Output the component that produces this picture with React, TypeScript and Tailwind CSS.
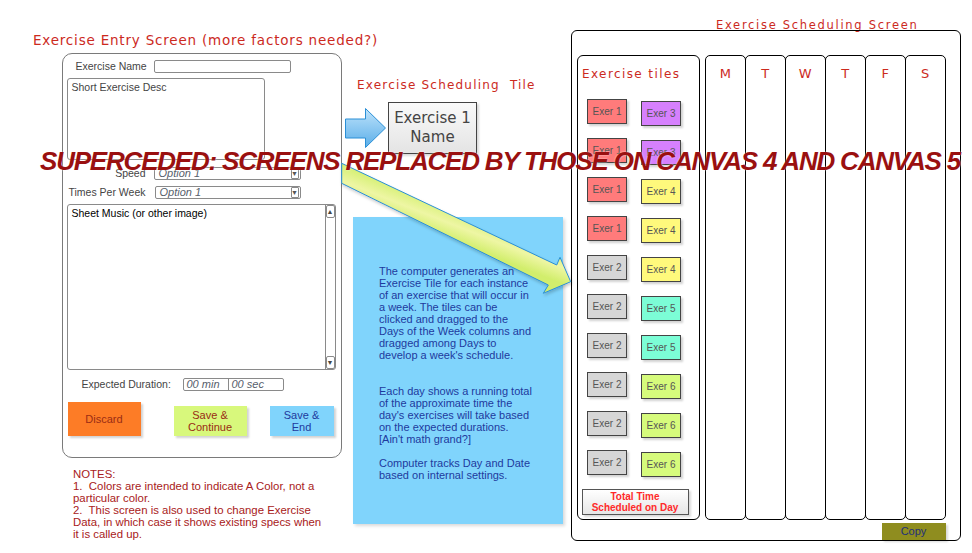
import React from "react";

const hand = "font-['DejaVu_Sans',sans-serif]";
const sans = "font-['Liberation_Sans',Arial,sans-serif]";

const leftTiles: [string, string][] = [
  ["Exer 1", "bg-[#ff7b7b]"],
  ["Exer 1", "bg-[#ff7b7b]"],
  ["Exer 1", "bg-[#ff7b7b]"],
  ["Exer 1", "bg-[#ff7b7b]"],
  ["Exer 2", "bg-[#d6d6d6]"],
  ["Exer 2", "bg-[#d6d6d6]"],
  ["Exer 2", "bg-[#d6d6d6]"],
  ["Exer 2", "bg-[#d6d6d6]"],
  ["Exer 2", "bg-[#d6d6d6]"],
  ["Exer 2", "bg-[#d6d6d6]"],
];

const rightTiles: [string, string][] = [
  ["Exer 3", "bg-[#d680fd]"],
  ["Exer 3", "bg-[#d680fd]"],
  ["Exer 4", "bg-[#fff97c]"],
  ["Exer 4", "bg-[#fff97c]"],
  ["Exer 4", "bg-[#fff97c]"],
  ["Exer 5", "bg-[#7cfdd6]"],
  ["Exer 5", "bg-[#7cfdd6]"],
  ["Exer 6", "bg-[#d6fb7c]"],
  ["Exer 6", "bg-[#d6fb7c]"],
  ["Exer 6", "bg-[#d6fb7c]"],
];

const days = ["M", "T", "W", "T", "F", "S"];

function Select({ w }: { w: string }) {
  return (
    <div className={`flex h-[13px] ${w} items-center rounded-[2px] border border-[#8a8a8a] bg-white`}>
      <span className={`flex-1 pl-[4px] text-[11px] italic leading-none text-[#56606c] ${sans}`}>Option 1</span>
      <span className="mr-[1px] flex h-[11px] w-[8px] items-center justify-center rounded-[1px] border border-[#8a8a8a] text-[7px] leading-none text-[#555]">
        ▼
      </span>
    </div>
  );
}

function Tile({ label, color, className = "" }: { label: string; color: string; className?: string }) {
  return (
    <div
      className={`flex h-[25px] w-[40px] items-center justify-center border border-[#444] text-[10px] leading-none text-[#555] shadow-[2px_2px_2px_rgba(0,0,0,0.18)] ${color} ${sans} ${className}`}
    >
      {label}
    </div>
  );
}

function EntryForm() {
  return (
    <div className="ml-[29px] mt-[6px] flex h-[405px] w-[280px] shrink-0 flex-col rounded-[10px] border-[1.5px] border-[#7a7a7a] text-[10.5px] leading-[13px] text-[#444]">
      {/* name */}
      <div className="mt-[5.5px] flex h-[13px] items-center">
        <span className={`w-[90.5px] pl-[12.5px] ${sans}`}>Exercise Name</span>
        <div className="h-[13px] w-[137px] rounded-[2px] border border-[#8a8a8a]" />
      </div>
      {/* short desc */}
      <div className="ml-[3.5px] mt-[5px] h-[82px] w-[198px] shrink-0 rounded-[3px] border border-[#8a8a8a] pl-[4px] pt-[2px]">
        <span className={sans}>Short Exercise Desc</span>
      </div>
      {/* speed */}
      <div className="mt-[7px] flex h-[13px] items-center">
        <span className={`w-[82.5px] text-right ${sans}`}>Speed</span>
        <div className="ml-[8px]">
          <Select w="w-[147px]" />
        </div>
      </div>
      {/* times */}
      <div className="mt-[6px] flex h-[13px] items-center">
        <span className={`w-[82.5px] text-right ${sans}`}>Times Per Week</span>
        <div className="ml-[9px]">
          <Select w="w-[146px]" />
        </div>
      </div>
      {/* sheet music */}
      <div className="ml-[3.5px] mt-[5px] flex h-[166px] w-[269px] shrink-0 rounded-[3px] border border-[#8a8a8a]">
        <div className={`flex-1 pl-[4px] pt-[2px] text-black ${sans}`}>Sheet Music (or other image)</div>
        <div className="flex w-[10px] flex-col justify-between border-l border-[#8a8a8a]">
          <div className="flex h-[13px] items-center justify-center rounded-[2px] border border-[#8a8a8a] text-[7px] text-[#444]">▲</div>
          <div className="flex h-[13px] items-center justify-center rounded-[2px] border border-[#8a8a8a] text-[7px] text-[#444]">▼</div>
        </div>
      </div>
      {/* duration */}
      <div className="mt-[8px] flex h-[13px] items-center">
        <span className={`w-[119.5px] pl-[18.5px] ${sans}`}>Expected Duration:</span>
        <div className={`flex h-[13px] w-[101px] rounded-[2px] border border-[#8a8a8a] text-[11px] italic leading-[11px] text-[#56606c] ${sans}`}>
          <span className="w-[45px] border-r border-[#8a8a8a] pl-[3px]">00 min</span>
          <span className="pl-[3px]">00 sec</span>
        </div>
      </div>
      {/* buttons */}
      <div className={`mt-[11px] flex h-[34px] items-end text-[11px] leading-[12px] ${sans}`}>
        <div className="ml-[4.5px] flex h-[34px] w-[73px] items-center justify-center bg-[#fd7c26] text-[#9a2c14] shadow-[2px_2px_2px_rgba(0,0,0,0.18)]">
          Discard
        </div>
        <div className="ml-[33px] flex h-[30px] w-[73px] items-center justify-center bg-[#d8f87c] text-center text-[#992c14] shadow-[2px_2px_2px_rgba(0,0,0,0.18)]">
          Save &amp;
          <br />
          Continue
        </div>
        <div className="ml-[23px] flex h-[30px] w-[64px] items-center justify-center bg-[#80d4fc] text-center text-[#1e3a9e] shadow-[2px_2px_2px_rgba(0,0,0,0.18)]">
          Save &amp;
          <br />
          End
        </div>
      </div>
    </div>
  );
}

function LeftColumn() {
  return (
    <div className="ml-[33px] flex w-[312px] shrink-0 flex-col">
      <div className={`mt-[33px] h-[14px] whitespace-nowrap text-[13.5px] leading-[14px] tracking-[0.8px] text-[#cc2a1e] ${hand}`}>
        Exercise Entry Screen (more factors needed?)
      </div>
      <EntryForm />
      <div className={`ml-[40px] mt-[10px] whitespace-pre text-[11.4px] leading-[12px] text-[#a82020] ${sans}`}>
        <div>NOTES:</div>
        <div>1.  Colors are intended to indicate A Color, not a</div>
        <div>particular color.</div>
        <div>2.  This screen is also used to change Exercise</div>
        <div>Data, in which case it shows existing specs when</div>
        <div>it is called up.</div>
      </div>
    </div>
  );
}

function MiddleColumn() {
  return (
    <div className="flex w-[226px] shrink-0 flex-col">
      <div className={`mt-[78px] h-[14px] whitespace-pre pl-[12px] text-[12px] leading-[14px] tracking-[1.2px] text-[#cc2a1e] ${hand}`}>
        Exercise Scheduling  Tile
      </div>
      <div className="mt-[10px] flex items-start">
        <svg width="41" height="41" viewBox="0 0 41 41" className="mt-[6px]">
          <defs>
            <linearGradient id="ba" x1="0" y1="0" x2="0" y2="1">
              <stop offset="0" stopColor="#bfe3fb" />
              <stop offset="1" stopColor="#5aaee8" />
            </linearGradient>
          </defs>
          <polygon
            points="0.5,11 20.5,11 20.5,0.5 40.5,20 20.5,39.5 20.5,30 0.5,30"
            fill="url(#ba)"
            stroke="#2b8fd6"
            strokeWidth="1"
          />
        </svg>
        <div
          className={`ml-[2px] flex h-[52px] w-[89px] flex-col items-center justify-center border border-[#444] bg-gradient-to-b from-[#fafafa] to-[#e4e4e4] text-[15px] leading-[19px] text-[#444] shadow-[2px_2px_2px_rgba(0,0,0,0.15)] ${hand}`}
        >
          <span>Exercise 1</span>
          <span>Name</span>
        </div>
      </div>
      <div className={`ml-[8px] mt-[63px] h-[307px] w-[210px] shrink-0 bg-[#80d4fc] pl-[26px] pt-[48px] text-[11px] leading-[12px] text-[#1e3a9e] shadow-[2px_2px_3px_rgba(0,0,0,0.15)] ${sans}`}>
        <div>The computer generates an</div>
        <div>Exercise Tile for each instance</div>
        <div>of an exercise that will occur in</div>
        <div>a week. The tiles can be</div>
        <div>clicked and dragged to the</div>
        <div>Days of the Week columns and</div>
        <div>dragged among Days to</div>
        <div>develop a week's schedule.</div>
        <div className="h-[24px]" />
        <div>Each day shows a running total</div>
        <div>of the approximate time the</div>
        <div>day's exercises will take based</div>
        <div>on the expected durations.</div>
        <div>[Ain't math grand?]</div>
        <div className="h-[12px]" />
        <div>Computer tracks Day and Date</div>
        <div>based on internal settings.</div>
      </div>
    </div>
  );
}

function SchedulePanel() {
  return (
    <div className="flex w-[390px] shrink-0 flex-col">
      <div className={`mt-[20px] h-[10px] whitespace-nowrap pl-[145px] text-[11.5px] leading-[11px] tracking-[1.7px] text-[#cc2a1e] ${hand}`}>
        Exercise Scheduling Screen
      </div>
      <div className="flex h-[511px] w-[390px] flex-col rounded-[6px] border-[1.5px] border-black">
        <div className="ml-[4.5px] mt-[23.5px] flex h-[465px]">
          <div className="flex h-full w-[123px] flex-col rounded-[6px] border-[1.5px] border-black">
            <div className={`mt-[11px] h-[14px] whitespace-nowrap pl-[4.5px] text-[12px] leading-[14px] tracking-[1.4px] text-[#cc2a1e] ${hand}`}>
              Exercise tiles
            </div>
            <div className="mt-[18.5px] flex flex-col">
              {leftTiles.map((t, i) => (
                <div key={i} className="flex h-[39px] items-start pl-[9.5px]">
                  <Tile label={t[0]} color={t[1]} />
                  <Tile label={rightTiles[i][0]} color={rightTiles[i][1]} className="ml-[14px] mt-[2px]" />
                </div>
              ))}
            </div>
            <div
              className={`ml-[4px] flex h-[26px] w-[107px] flex-col items-center justify-center border border-[#555] bg-gradient-to-b from-white to-[#e6e6e6] text-[10px] font-bold leading-[11px] text-[#ff2a2a] shadow-[2px_2px_2px_rgba(0,0,0,0.15)] ${sans}`}
            >
              <span>Total Time</span>
              <span>Scheduled on Day</span>
            </div>
          </div>
          <div className="ml-[5px] flex">
            {days.map((d, i) => (
              <div
                key={i}
                className={`flex h-full w-[41.5px] justify-center rounded-[5px] border-[1.5px] border-black ${i > 0 ? "-ml-[1.5px]" : ""}`}
              >
                <span className={`mt-[11px] text-[13px] leading-[14px] text-[#cc2a1e] ${hand}`}>{d}</span>
              </div>
            ))}
          </div>
        </div>
        <div
          className={`mr-[14.5px] mt-[3px] flex h-[17px] w-[64px] items-center justify-center self-end bg-[#8f8d1f] text-[11px] text-[#22307a] shadow-[2px_2px_2px_rgba(0,0,0,0.15)] ${sans}`}
        >
          Copy
        </div>
      </div>
    </div>
  );
}

export default function App() {
  return (
    <div className="relative flex h-[553px] w-[972px] overflow-hidden bg-white">
      <LeftColumn />
      <MiddleColumn />
      <SchedulePanel />

      {/* big pointer arrow from tile to scheduling screen */}
      <svg className="pointer-events-none absolute left-0 top-0" width="972" height="553">
        <defs>
          <linearGradient id="ga" gradientUnits="userSpaceOnUse" x1="452" y1="208" x2="441" y2="236">
            <stop offset="0" stopColor="#d6f076" />
            <stop offset="0.5" stopColor="#eef6a4" />
            <stop offset="1" stopColor="#d2ee6c" />
          </linearGradient>
          <filter id="sh" x="-10%" y="-10%" width="120%" height="130%">
            <feDropShadow dx="1" dy="2" stdDeviation="1.5" floodColor="#000" floodOpacity="0.2" />
          </filter>
        </defs>
        <polygon
          points="341.7,163.3 556.7,265 560,257.3 570.7,281.7 543.3,293.3 548.3,285 341.7,183.3"
          fill="url(#ga)"
          stroke="#2b8fd6"
          strokeWidth="1"
          filter="url(#sh)"
        />
      </svg>

      <div
        className={`absolute left-[40px] top-[146px] whitespace-nowrap text-[26px] font-bold italic leading-[30px] tracking-[-1.2px] text-[#9a1010] [text-shadow:0_0_2px_rgba(255,255,255,0.8)] ${sans}`}
      >
        SUPERCEDED: SCREENS REPLACED BY THOSE ON CANVAS 4 AND CANVAS 5
      </div>
    </div>
  );
}
